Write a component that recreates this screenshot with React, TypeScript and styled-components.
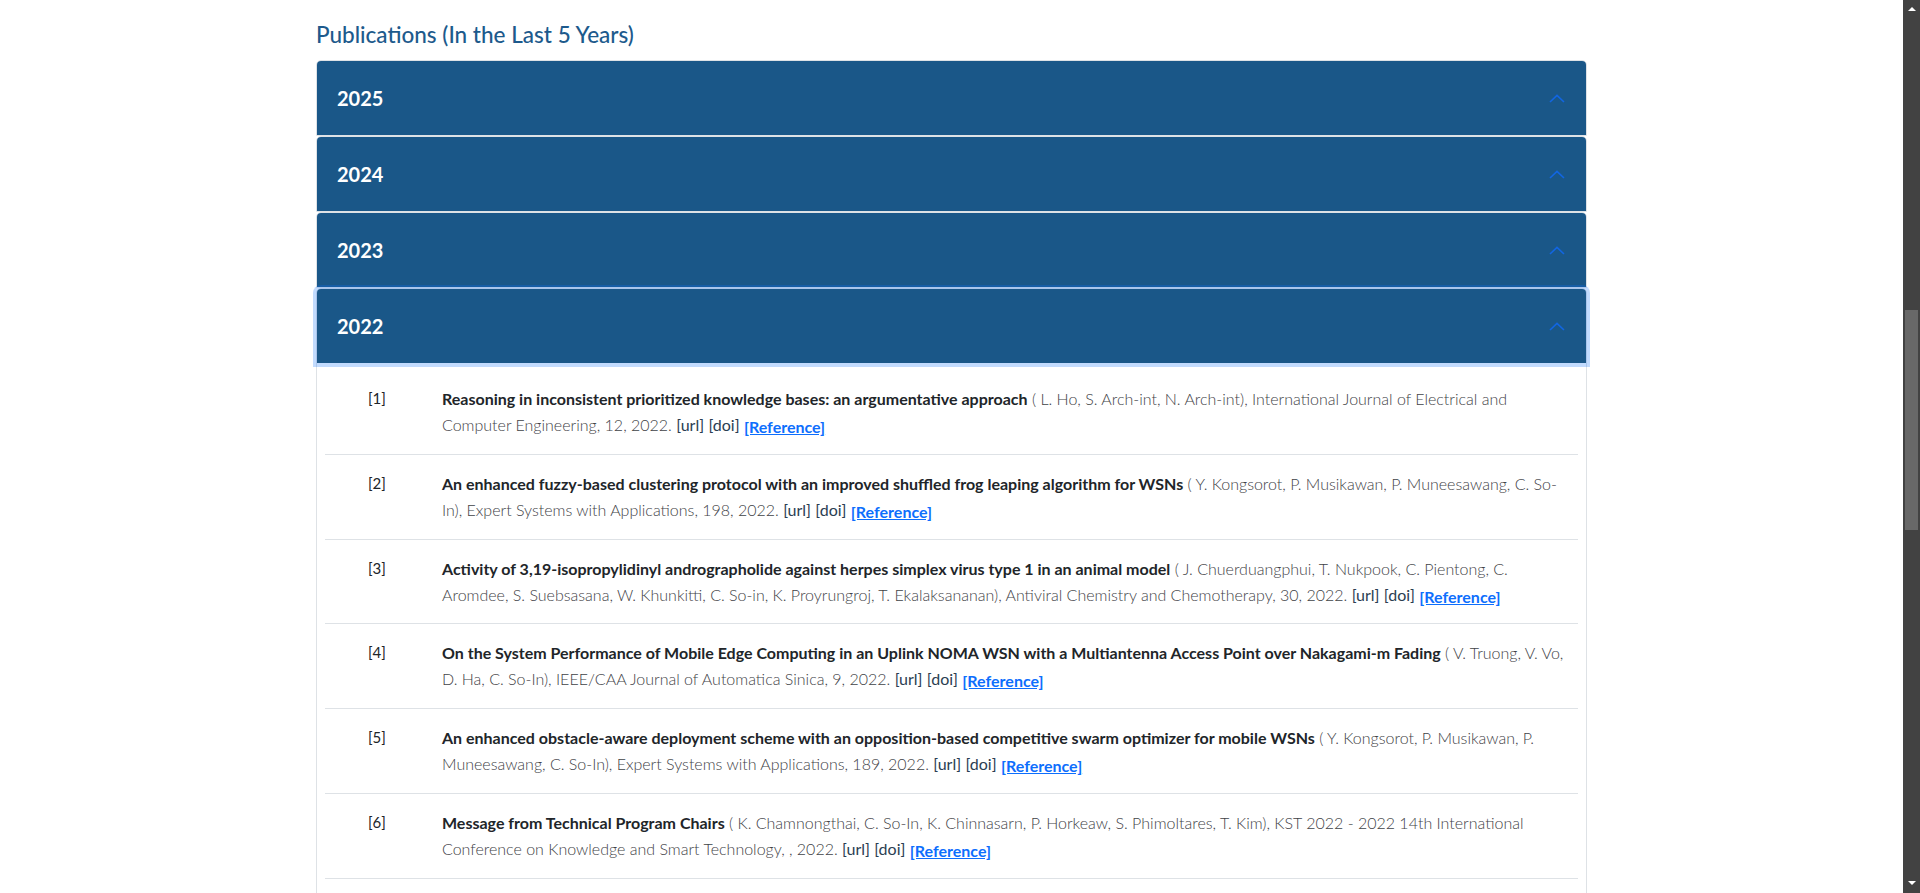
import React from "react";
import styled, { createGlobalStyle } from "styled-components";

const FONT = `Lato, "Noto Sans", "Liberation Sans", sans-serif`;

const GlobalStyle = createGlobalStyle`
  html, body {
    margin: 0;
    padding: 0;
    background: #ffffff;
    overflow: hidden;
  }
  body {
    font-family: ${FONT};
    -webkit-font-smoothing: antialiased;
  }
`;

const Page = styled.main`
  width: calc(100% - 17px);
  padding-top: 20px;
`;

const Container = styled.section`
  width: 1271px;
  margin: 0 auto;
`;

const Heading = styled.h2`
  margin: 0 0 11px;
  font-size: 22.5px;
  line-height: 29px;
  font-weight: 500;
  color: #1d5a8c;
`;

const Accordion = styled.div`
  display: flex;
  flex-direction: column;
`;

const Item = styled.div`
  border: 1px solid #dee2e6;
  border-radius: 5px 5px 0 0;
  background: #ffffff;
`;

const Header = styled.div<{ $focused?: boolean }>`
  position: relative;
  z-index: ${(p) => (p.$focused ? 2 : 1)};
  height: 74px;
  display: flex;
  align-items: center;
  justify-content: space-between;
  padding: 0 21px 0 20px;
  background: #1a5788;
  color: #ffffff;
  font-size: 20px;
  font-weight: 700;
  border-radius: 4px 4px 0 0;
  box-shadow: ${(p) => (p.$focused ? "0 0 0 4px rgba(13, 110, 253, 0.25)" : "none")};
`;

const Chevron = styled.svg`
  width: 16px;
  height: 9px;
  flex: none;
`;

const Body = styled.div`
  padding: 7px 8px 20px;
`;

const Row = styled.div`
  display: grid;
  grid-template-columns: 74px 1fr;
  padding: 16px 10px 16px 43px;
  border-bottom: 1px solid #dee2e6;
  font-size: 16px;
  line-height: 25.9px;
`;

const Num = styled.div`
  color: #212529;
  font-weight: 400;
  font-size: 15px;
`;

const Text = styled.div`
  color: #3f4347;
  font-weight: 300;
`;

const Title = styled.strong`
  color: #212529;
  font-weight: 700;
`;

const Plain = styled.a`
  color: #2b3e52;
  font-weight: 400;
  text-decoration: none;
`;

const Ref = styled.a`
  position: relative;
  top: 2px;
  color: #0d6efd;
  font-weight: 700;
  text-decoration: underline;
`;

const ScrollTrack = styled.div`
  position: fixed;
  top: 0;
  right: 0;
  width: 17px;
  height: 100%;
  background: #424242;
`;

const ScrollThumb = styled.div`
  position: absolute;
  top: 310px;
  left: 2px;
  width: 13px;
  height: 220px;
  background: #686868;
`;

const Arrow = styled.div<{ $down?: boolean }>`
  position: absolute;
  left: 5px;
  ${(p) => (p.$down ? "bottom: 8px;" : "top: 7px;")}
  width: 0;
  height: 0;
  border-left: 4px solid transparent;
  border-right: 4px solid transparent;
  ${(p) => (p.$down ? "border-top: 4px solid #ffffff;" : "border-bottom: 4px solid #ffffff;")}
`;

type Pub = { title: string; rest: string };

const pubs: Pub[] = [
  {
    title: "Reasoning in inconsistent prioritized knowledge bases: an argumentative approach",
    rest: "( L. Ho, S. Arch-int, N. Arch-int), International Journal of Electrical and Computer Engineering, 12, 2022.",
  },
  {
    title:
      "An enhanced fuzzy-based clustering protocol with an improved shuffled frog leaping algorithm for WSNs",
    rest: "( Y. Kongsorot, P. Musikawan, P. Muneesawang, C. So-In), Expert Systems with Applications, 198, 2022.",
  },
  {
    title:
      "Activity of 3,19-isopropylidinyl andrographolide against herpes simplex virus type 1 in an animal model",
    rest: "( J. Chuerduangphui, T. Nukpook, C. Pientong, C. Aromdee, S. Suebsasana, W. Khunkitti, C. So-in, K. Proyrungroj, T. Ekalaksananan), Antiviral Chemistry and Chemotherapy, 30, 2022.",
  },
  {
    title:
      "On the System Performance of Mobile Edge Computing in an Uplink NOMA WSN with a Multiantenna Access Point over Nakagami-m Fading",
    rest: "( V. Truong, V. Vo, D. Ha, C. So-In), IEEE/CAA Journal of Automatica Sinica, 9, 2022.",
  },
  {
    title:
      "An enhanced obstacle-aware deployment scheme with an opposition-based competitive swarm optimizer for mobile WSNs",
    rest: "( Y. Kongsorot, P. Musikawan, P. Muneesawang, C. So-In), Expert Systems with Applications, 189, 2022.",
  },
  {
    title: "Message from Technical Program Chairs",
    rest: "( K. Chamnongthai, C. So-In, K. Chinnasarn, P. Horkeaw, S. Phimoltares, T. Kim), KST 2022 - 2022 14th International Conference on Knowledge and Smart Technology, , 2022.",
  },
];

const ChevronUp = () => (
  <Chevron viewBox="0 0 16 9" aria-hidden="true">
    <polyline points="1,8 8,1.4 15,8" fill="none" stroke="#1266e2" strokeWidth="1.6" />
  </Chevron>
);

export default function App() {
  const years = ["2025", "2024", "2023"];
  return (
    <>
      <GlobalStyle />
      <Page>
        <Container>
          <Heading>Publications (In the Last 5 Years)</Heading>
          <Accordion>
            {years.map((y) => (
              <Item key={y}>
                <Header>
                  <span>{y}</span>
                  <ChevronUp />
                </Header>
              </Item>
            ))}
            <Item>
              <Header $focused>
                <span>2022</span>
                <ChevronUp />
              </Header>
              <Body>
                {pubs.map((p, i) => (
                  <Row key={i}>
                    <Num>[{i + 1}]</Num>
                    <Text>
                      <Title>{p.title}</Title> {p.rest} <Plain href="#">[url]</Plain>{" "}
                      <Plain href="#">[doi]</Plain> <Ref href="#">[Reference]</Ref>
                    </Text>
                  </Row>
                ))}
              </Body>
            </Item>
          </Accordion>
        </Container>
      </Page>
      <ScrollTrack>
        <Arrow />
        <ScrollThumb />
        <Arrow $down />
      </ScrollTrack>
    </>
  );
}
